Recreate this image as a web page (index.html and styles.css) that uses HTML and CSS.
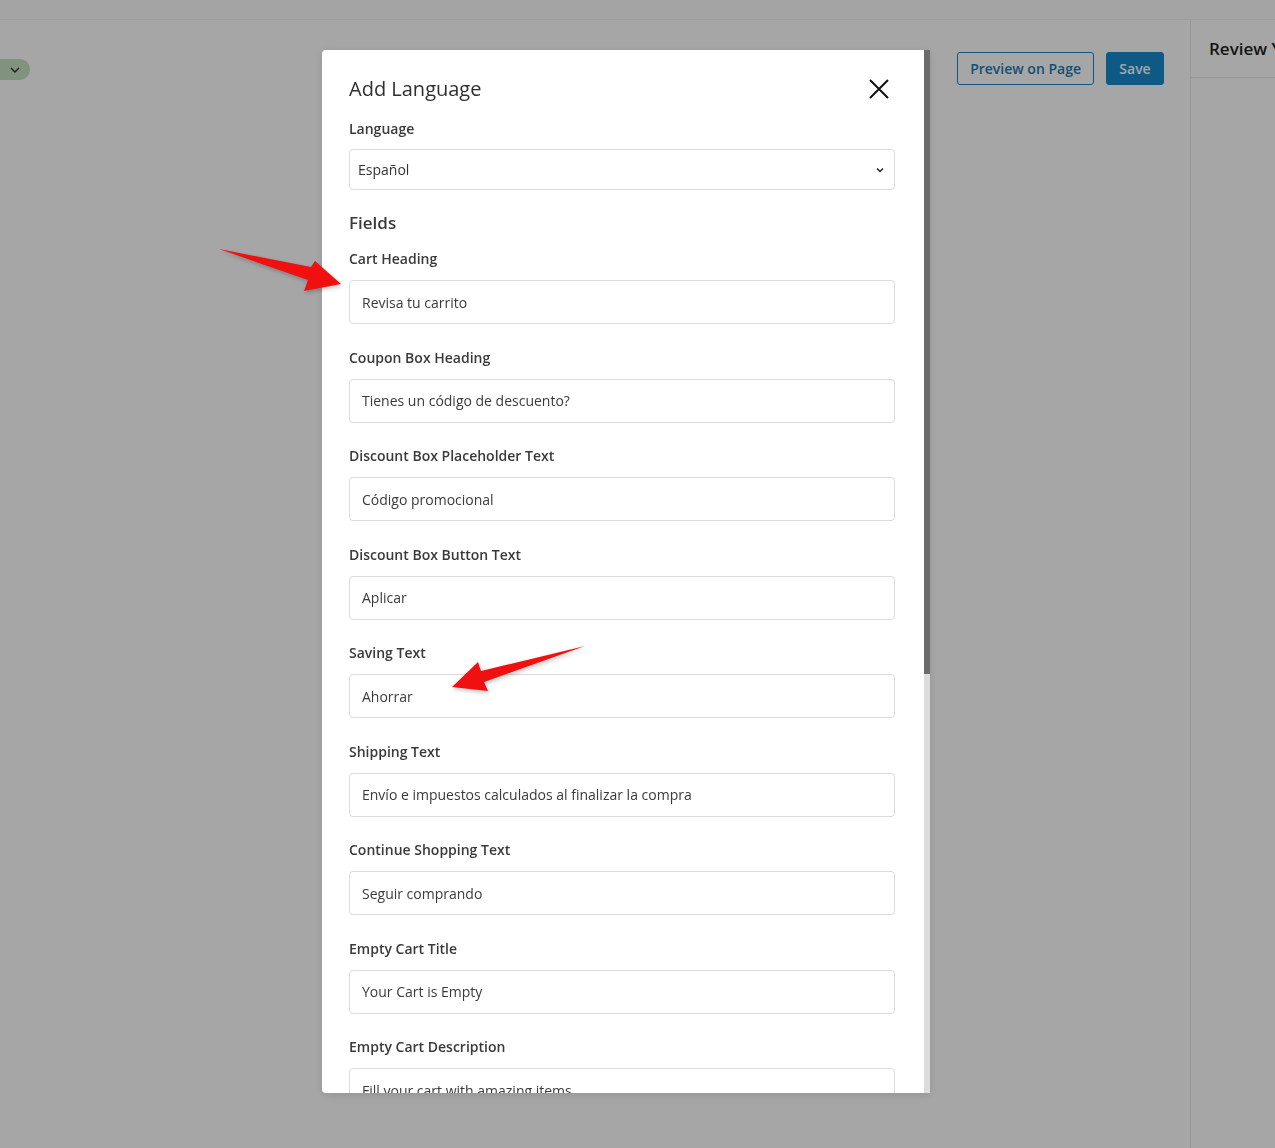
FILE: index.html
```html
<!DOCTYPE html>
<html lang="en">
<head>
  <meta charset="UTF-8" />
  <meta name="viewport" content="width=device-width, initial-scale=1.0"/>
  <title>Cart Translations</title>
  <link rel="stylesheet" href="styles.css">
</head>
<body>

  <div class="topbar"></div>

  <div class="page">
    <div class="editor">
      <div class="editor-toolbar">
        <span class="status-pill">
          <svg width="14" height="14" viewBox="0 0 14 14"><path d="M3 5l4 4 4-4" fill="none" stroke="#2b2b2b" stroke-width="1.4"/></svg>
        </span>
        <div class="toolbar-actions">
          <button class="btn-outline">Preview on Page</button>
          <button class="btn-primary">Save</button>
        </div>
      </div>
    </div>
    <aside class="side-panel">
      <div class="side-head">Review Your Cart</div>
    </aside>
  </div>

  <div class="backdrop"></div>

  <div class="modal">
    <div class="modal-body">
      <div class="modal-head">
        <h2>Add Language</h2>
        <button class="close-btn" aria-label="Close">
          <svg width="20" height="20" viewBox="0 0 20 20"><path d="M1 1L19 19M19 1L1 19" stroke="#111" stroke-width="2"/></svg>
        </button>
      </div>

      <label class="label">Language</label>
      <div class="select">
        <span>Español</span>
        <svg width="10" height="10" viewBox="0 0 10 10"><path d="M2 3.5l3 3 3-3" fill="none" stroke="#222" stroke-width="1.5"/></svg>
      </div>

      <h3>Fields</h3>

      <div id="fieldList"></div>
    </div>
    <div class="scroll-track">
      <div class="scroll-thumb"></div>
    </div>
  </div>

  <svg class="annotations" width="1275" height="1148" viewBox="0 0 1275 1148">
    <polygon points="219,249 311,267 315,261 341,284 304,291 308,280" fill="#f01010"/>
    <polygon points="585,646 481,671 478,662 452,687 488,691 484,682" fill="#f01010"/>
  </svg>

  <script>
    const fields = [
      ["Cart Heading", "Revisa tu carrito"],
      ["Coupon Box Heading", "Tienes un código de descuento?"],
      ["Discount Box Placeholder Text", "Código promocional"],
      ["Discount Box Button Text", "Aplicar"],
      ["Saving Text", "Ahorrar"],
      ["Shipping Text", "Envío e impuestos calculados al finalizar la compra"],
      ["Continue Shopping Text", "Seguir comprando"],
      ["Empty Cart Title", "Your Cart is Empty"],
      ["Empty Cart Description", "Fill your cart with amazing items"],
      ["Empty Cart Button Text", "Shop Now"],
      ["Subtotal Text", "Subtotal"],
      ["Checkout Button Text", "Finalizar compra"]
    ];

    const list = document.getElementById("fieldList");

    fields.forEach(([label, value]) => {
      const div = document.createElement("div");
      div.className = "field";
      div.innerHTML = `
        <label class="label">${label}</label>
        <input type="text" value="${value}" />
      `;
      list.appendChild(div);
    });
  </script>

</body>
</html>
```

FILE: styles.css
```css
* {
  margin: 0;
  padding: 0;
  box-sizing: border-box;
  font-family: 'Open Sans', 'Noto Sans', sans-serif;
}

body {
  background: #fff;
  height: 1148px;
  overflow: hidden;
}

.topbar {
  height: 20px;
  background: #fcfcfc;
  border-bottom: 1px solid #f0f0f0;
}

.page {
  display: flex;
  height: calc(100% - 20px);
}

.editor {
  flex: 1;
}

.editor-toolbar {
  display: flex;
  justify-content: space-between;
  align-items: flex-start;
  padding: 32px 26px 0 0;
}

.status-pill {
  display: flex;
  align-items: center;
  justify-content: flex-end;
  width: 30px;
  height: 21px;
  margin-top: 7px;
  padding-right: 8px;
  background: #c6e2c0;
  border-radius: 0 11px 11px 0;
}

.toolbar-actions {
  display: flex;
  gap: 12px;
}

.toolbar-actions button {
  height: 33px;
  padding: 0 12px;
  border-radius: 3px;
  font-size: 14px;
  font-weight: 600;
  cursor: pointer;
}

.btn-outline {
  background: #fff;
  color: #1b7ab4;
  border: 1px solid #1f86c0;
  margin-left: 2px;
}

.btn-primary {
  background: #168acd;
  color: #fff;
  border: 1px solid #168acd;
  width: 58px;
}

.side-panel {
  width: 85px;
  border-left: 1px solid #eaeaea;
}

.side-head {
  height: 58px;
  padding: 17px 0 0 18px;
  border-bottom: 1px solid #e6e6e6;
  font-size: 17px;
  font-weight: 600;
  color: #1e1e1e;
  white-space: nowrap;
  overflow: hidden;
}

.backdrop {
  position: fixed;
  inset: 0;
  background: rgba(0, 0, 0, 0.35);
}

.modal {
  position: fixed;
  left: 322px;
  top: 50px;
  width: 608px;
  height: 1043px;
  display: flex;
  background: #fff;
  border-radius: 4px 0 0 4px;
  overflow: hidden;
  box-shadow: 0 2px 10px rgba(0,0,0,0.12);
}

.modal-body {
  flex: 1;
  padding: 25px 29px 30px 27px;
  overflow: hidden;
}

.scroll-track {
  width: 6px;
  background: #dcdcdc;
}

.scroll-thumb {
  height: 624px;
  background: #6c6c6c;
}

.modal-head {
  display: flex;
  justify-content: space-between;
  align-items: center;
  margin-bottom: 16px;
}

.modal-head h2 {
  font-size: 20px;
  line-height: 28px;
  font-weight: 400;
  color: #2f2f2f;
}

.close-btn {
  background: none;
  border: none;
  cursor: pointer;
  display: flex;
  margin-right: 6px;
}

.label {
  display: block;
  font-size: 14px;
  line-height: 20px;
  font-weight: 600;
  color: #3a3a3a;
  margin-bottom: 10px;
}

.select {
  display: flex;
  justify-content: space-between;
  align-items: center;
  height: 41px;
  padding: 0 9px 0 8px;
  border: 1px solid #dcdcdc;
  border-radius: 4px;
  font-size: 14px;
  color: #333;
}

.modal h3 {
  font-size: 17px;
  line-height: 24px;
  font-weight: 600;
  color: #3a3a3a;
  margin: 21px 0 14px;
}

.field {
  margin-bottom: 23.5px;
}

.field .label {
  margin-bottom: 11px;
}

.field input {
  width: 100%;
  height: 44px;
  padding: 0 12px;
  border: 1px solid #dcdcdc;
  border-radius: 4px;
  font-size: 14px;
  color: #3a3a3a;
  outline: none;
}

.annotations {
  position: fixed;
  left: 0;
  top: 0;
  pointer-events: none;
  filter: drop-shadow(1px 2px 2px rgba(0,0,0,0.25));
}
```
